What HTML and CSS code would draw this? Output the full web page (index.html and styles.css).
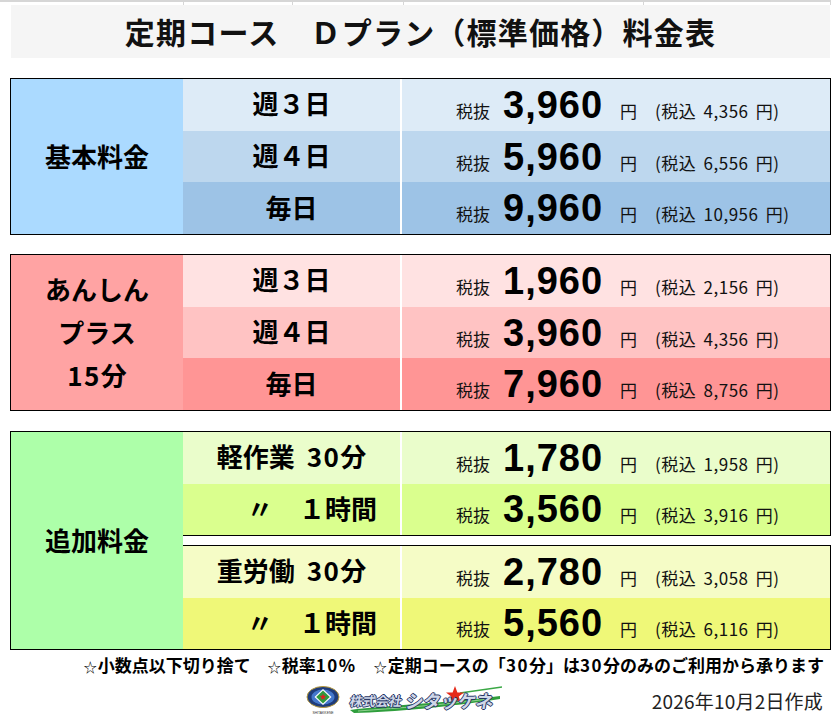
FILE: index.html
```html
<!DOCTYPE html>
<html lang="ja">
<head>
<meta charset="utf-8">
<title>定期コース Dプラン（標準価格）料金表</title>
<link rel="stylesheet" href="styles.css">
</head>
<body>
<div class="page">
  <div class="gridline"><span class="g1"></span><span class="g2"></span><span class="g3"></span><span class="g4"></span><span class="g5"></span></div>
  <div class="title">定期コース　Ｄプラン（標準価格）料金表</div>

  <div class="tbl boxed blue">
    <div class="label"><div>基本料金</div></div>
    <div class="rows">
      <div class="row r1"><div class="name">週３日</div><div class="price"><span class="ex">税抜</span><span class="num">3,960</span><span class="yen">円</span><span class="inc">(税込 4,356 円)</span></div></div>
      <div class="row r2"><div class="name">週４日</div><div class="price"><span class="ex">税抜</span><span class="num">5,960</span><span class="yen">円</span><span class="inc">(税込 6,556 円)</span></div></div>
      <div class="row r3"><div class="name">毎日</div><div class="price"><span class="ex">税抜</span><span class="num">9,960</span><span class="yen">円</span><span class="inc">(税込 10,956 円)</span></div></div>
    </div>
  </div>

  <div class="tbl boxed pink">
    <div class="label"><div>あんしん<br>プラス<br><span class="h">15</span>分</div></div>
    <div class="rows">
      <div class="row r1"><div class="name">週３日</div><div class="price"><span class="ex">税抜</span><span class="num">1,960</span><span class="yen">円</span><span class="inc">(税込 2,156 円)</span></div></div>
      <div class="row r2"><div class="name">週４日</div><div class="price"><span class="ex">税抜</span><span class="num">3,960</span><span class="yen">円</span><span class="inc">(税込 4,356 円)</span></div></div>
      <div class="row r3"><div class="name">毎日</div><div class="price"><span class="ex">税抜</span><span class="num">7,960</span><span class="yen">円</span><span class="inc">(税込 8,756 円)</span></div></div>
    </div>
  </div>

  <div class="tbl green">
    <div class="label"><div>追加料金</div></div>
    <div class="groups">
      <div class="group">
        <div class="row r1"><div class="name">軽作業<span class="h sp">30</span>分</div><div class="price"><span class="ex">税抜</span><span class="num">1,780</span><span class="yen">円</span><span class="inc">(税込 1,958 円)</span></div></div>
        <div class="row r2"><div class="name left">〃　１時間</div><div class="price"><span class="ex">税抜</span><span class="num">3,560</span><span class="yen">円</span><span class="inc">(税込 3,916 円)</span></div></div>
      </div>
      <div class="group">
        <div class="row r3"><div class="name">重労働<span class="h sp">30</span>分</div><div class="price"><span class="ex">税抜</span><span class="num">2,780</span><span class="yen">円</span><span class="inc">(税込 3,058 円)</span></div></div>
        <div class="row r4"><div class="name left">〃　１時間</div><div class="price"><span class="ex">税抜</span><span class="num">5,560</span><span class="yen">円</span><span class="inc">(税込 6,116 円)</span></div></div>
      </div>
    </div>
  </div>

  <div class="notes"><span class="star">☆</span>小数点以下切り捨て　<span class="star">☆</span>税率<span class="h">10%</span>　<span class="star">☆</span>定期コースの「<span class="h">30</span>分」は<span class="h">30</span>分のみのご利用から承ります</div>

  <div class="footer">
    <svg class="emblem" width="34" height="30" viewBox="0 0 34 30">
      <ellipse cx="17" cy="12" rx="16" ry="10.5" fill="#1f3c7a" stroke="#b89a3c" stroke-width="1"/>
      <ellipse cx="17" cy="12" rx="11.5" ry="7.5" fill="#4478cc"/>
      <polygon points="17,4 25.5,12 17,20 8.5,12" fill="#ffffff"/>
      <polygon points="17,5.6 23.8,12 17,18.4 10.2,12" fill="#2f9a3f"/>
      <polygon points="17,8.5 17.82,10.87 20.33,10.92 18.33,12.43 19.06,14.83 17,13.4 14.94,14.83 15.67,12.43 13.67,10.92 16.18,10.87" fill="#e02020"/>
      <text x="17" y="28.5" font-size="3.4" text-anchor="middle" fill="#333" font-family="Liberation Sans, sans-serif">SHITAKKENE</text>
    </svg>
    <div class="brand">
      <svg class="brush" width="156" height="32" viewBox="0 0 156 32">
        <path d="M2,26 C40,21 100,19 152,12 L152,15 C100,23 45,28 6,29 Z" fill="#2f9e3c"/>
        <path d="M10,27 C50,24 95,21 140,15" stroke="#8fd08f" stroke-width="1" fill="none"/>
        <path d="M112,9 L154,3" stroke="#3aa845" stroke-width="1.3"/>
        <polygon points="107,2 109.4,8.5 116,8.5 110.8,12.5 112.8,19 107,15 101.2,19 103.2,12.5 98,8.5 104.6,8.5" fill="#e52a1a"/>
      </svg>
      <span class="co">株式会社</span><span class="kana">シタッケネ</span>
    </div>
    <div class="date">2026年10月2日作成</div>
  </div>
</div>
</body>
</html>
```
FILE: styles.css
```css
* { box-sizing: border-box; margin: 0; padding: 0; }
body {
  margin: 0;
  background: #ffffff;
  color: #000;
  font-family: "Noto Sans CJK JP", "Noto Sans", sans-serif;
}
.page { width: 840px; height: 720px; overflow: hidden; }

.gridline { display: flex; width: 831px; height: 5px; border-top: 2px solid #d6d6d6; }
.gridline span { border-right: 1px solid #d6d6d6; height: 100%; }
.g1 { width: 184px; }
.g2 { width: 109px; }
.g3 { width: 111px; }
.g4 { width: 240px; }
.g5 { flex: 1; }

.title {
  margin-left: 11px;
  width: 819px;
  height: 53px;
  background: #f5f5f5;
  font-size: 30px;
  font-weight: 700;
  letter-spacing: 1.2px;
  line-height: 53px;
  text-align: center;
  color: #111;
}

.tbl { display: flex; margin-left: 10px; width: 821px; margin-top: 20px; }
.tbl.boxed { border: 1px solid #000; height: 157px; }
.tbl.pink { margin-top: 19px; }

.label {
  width: 172px;
  display: flex;
  align-items: center;
  justify-content: center;
  text-align: center;
  font-size: 26px;
  font-weight: 700;
  line-height: 43px;
}
.label > div { padding-bottom: 2px; }
.rows { flex: 1; display: flex; flex-direction: column; }
.row { flex: 1; display: flex; }
.name {
  width: 219px;
  border-right: 2px solid #fff;
  display: flex;
  align-items: center;
  justify-content: center;
  font-size: 26px;
  font-weight: 700;
  padding-bottom: 4px;
  white-space: nowrap;
}
.name.left { justify-content: flex-start; padding-left: 64px; }
.h { letter-spacing: 1.5px; }
.sp { margin-left: 12px; }

.price {
  flex: 1;
  display: grid;
  grid-template-columns: 47px 117px 35px auto;
  align-items: baseline;
  align-content: center;
  padding-left: 54px;
  white-space: nowrap;
}
.ex, .yen, .inc { font-size: 17px; color: #111; }
.inc { letter-spacing: 0.5px; word-spacing: 3px; }
.num {
  font-family: "Liberation Sans", Arial, sans-serif;
  font-weight: 700;
  font-size: 38px;
  line-height: 40px;
  letter-spacing: 1px;
}

.blue .label { background: #abdaff; }
.blue .r1 { background: #ddebf7; }
.blue .r2 { background: #bdd7ee; }
.blue .r3 { background: #9dc3e6; }

.pink .label { background: #ffa3a3; }
.pink .r1 { background: #ffe2e2; }
.pink .r2 { background: #ffc3c3; }
.pink .r3 { background: #ff9595; }

.tbl.green { margin-top: 20px; height: 219px; }
.green .label {
  width: 173px;
  background: #adffa9;
  border: 1px solid #000;
  border-right: none;
}
.groups { flex: 1; display: flex; flex-direction: column; gap: 9px; }
.group {
  flex: 1;
  display: flex;
  flex-direction: column;
  border: 1px solid #000;
  border-left: none;
}
.green .r1 { background: #eafdcb; }
.green .r2 { background: #daff8e; }
.green .r3 { background: #f5fcc6; }
.green .r4 { background: #eff878; }

.notes {
  height: 30px;
  line-height: 30px;
  text-align: right;
  padding-right: 16px;
  font-size: 17px;
  font-weight: 700;
  white-space: nowrap;
}
.star { font-size: 13px; font-weight: 400; margin-right: 1px; }

.footer {
  display: flex;
  align-items: center;
  height: 40px;
  padding-left: 306px;
  padding-right: 17px;
}
.emblem { display: block; }
.brand {
  position: relative;
  width: 156px;
  height: 32px;
  margin-left: 8px;
  display: flex;
  align-items: center;
  padding-left: 2px;
  white-space: nowrap;
}
.brush { position: absolute; left: 0; top: 0; }
.co, .kana {
  position: relative;
  font-weight: 700;
  color: #cfd7e8;
  text-shadow: 1px 0 #263563, -1px 0 #263563, 0 1px #263563, 0 -1px #263563;
  transform: skewX(-10deg);
  display: inline-block;
}
.co { font-size: 13px; letter-spacing: 0; }
.kana { font-size: 18px; margin-left: 4px; letter-spacing: -0.5px; }
.date {
  margin-left: auto;
  font-size: 19px;
  color: #222;
  letter-spacing: 0.2px;
}
```
